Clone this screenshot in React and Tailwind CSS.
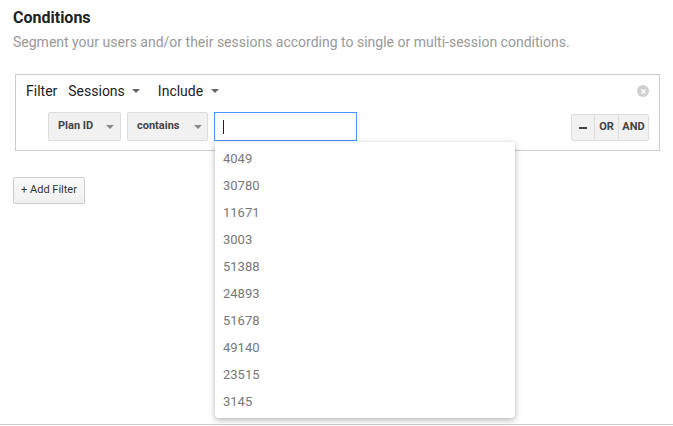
import React from 'react';

const values = ['4049', '30780', '11671', '3003', '51388', '24893', '51678', '49140', '23515', '3145'];

function Caret({ className = '' }) {
  return (
    <svg width="8" height="4" viewBox="0 0 8 4" className={className}>
      <path d="M0 0h8L4 4z" fill="currentColor" />
    </svg>
  );
}

export default function App() {
  return (
    <div className="relative w-[673px] h-[426px] bg-white font-['Roboto',sans-serif] overflow-hidden">
      <div className="pl-[13px] pt-[8px]">
        <h2 className="text-[16px] leading-[20px] font-bold text-[#222]">Conditions</h2>
        <p className="mt-[4px] text-[14px] leading-[20px] text-[#999]">
          Segment your users and/or their sessions according to single or multi-session conditions.
        </p>
      </div>

      {/* filter box */}
      <div className="relative ml-[15px] mt-[22px] w-[645px] border border-[#ccc] pb-[9px]">
        <div className="flex items-center h-[22px] mt-[5px] pl-[10px] text-[14px] text-[#222]">
          <span>Filter</span>
          <span className="ml-[11px]">Sessions</span>
          <Caret className="ml-[7px] text-[#666]" />
          <span className="ml-[18px]">Include</span>
          <Caret className="ml-[8px] text-[#666]" />
          <div className="ml-auto mr-[10px] w-[12px] h-[12px] rounded-full bg-[#d0d0d0] flex items-center justify-center">
            <svg width="7" height="7" viewBox="0 0 7 7">
              <path d="M1.5 1.5l4 4M5.5 1.5l-4 4" stroke="#fff" strokeWidth="1.3" />
            </svg>
          </div>
        </div>

        <div className="flex items-center mt-[10px] pl-[32px] pr-[10px]">
          <button className="shrink-0 whitespace-nowrap flex items-center h-[29px] w-[73px] pl-[9px] bg-[#f1f1f1] border border-[#ddd] rounded-[2px] text-[11px] font-bold text-[#444]">
            Plan ID
            <Caret className="ml-[13px] text-[#888]" />
          </button>
          <button className="shrink-0 whitespace-nowrap flex items-center h-[29px] w-[81px] ml-[6px] pl-[9px] bg-[#f1f1f1] border border-[#ddd] rounded-[2px] text-[11px] font-bold text-[#444]">
            contains
            <Caret className="ml-[15px] text-[#888]" />
          </button>
          <div className="relative shrink-0 ml-[6px]">
            <div className="h-[29px] w-[143px] border border-[#4d90fe] flex items-center pl-[8px]">
              <div className="w-[1px] h-[14px] bg-[#222]" />
            </div>
            <div className="absolute left-[1px] top-[30px] z-10 w-[300px] bg-white rounded-b-[4px] shadow-[0_2px_6px_rgba(0,0,0,0.3)] py-[3px]">
              {values.map(v => (
                <div key={v} className="h-[27px] flex items-center pl-[8px] text-[13px] text-[#777]">
                  {v}
                </div>
              ))}
            </div>
          </div>
          <div className="ml-auto flex h-[27px] mt-[2px] border border-[#ddd] bg-[#f1f1f1] rounded-[2px] text-[11px] font-bold text-[#444]">
            <span className="w-[23px] flex items-center justify-center border-r border-[#ddd]">
              <span className="w-[8px] h-[2px] bg-[#444]" />
            </span>
            <span className="w-[24px] flex items-center justify-center border-r border-[#ddd]">OR</span>
            <span className="w-[29px] flex items-center justify-center">AND</span>
          </div>
        </div>
      </div>

      <button className="ml-[13px] mt-[26px] h-[27px] w-[72px] border border-[#ccc] rounded-[2px] bg-gradient-to-b from-[#fafafa] to-[#f0f0f0] text-[11px] text-[#333]">
        + Add Filter
      </button>

      <div className="absolute left-0 right-0 bottom-[1px] h-[1px] bg-[#ccc]" />
    </div>
  );
}
